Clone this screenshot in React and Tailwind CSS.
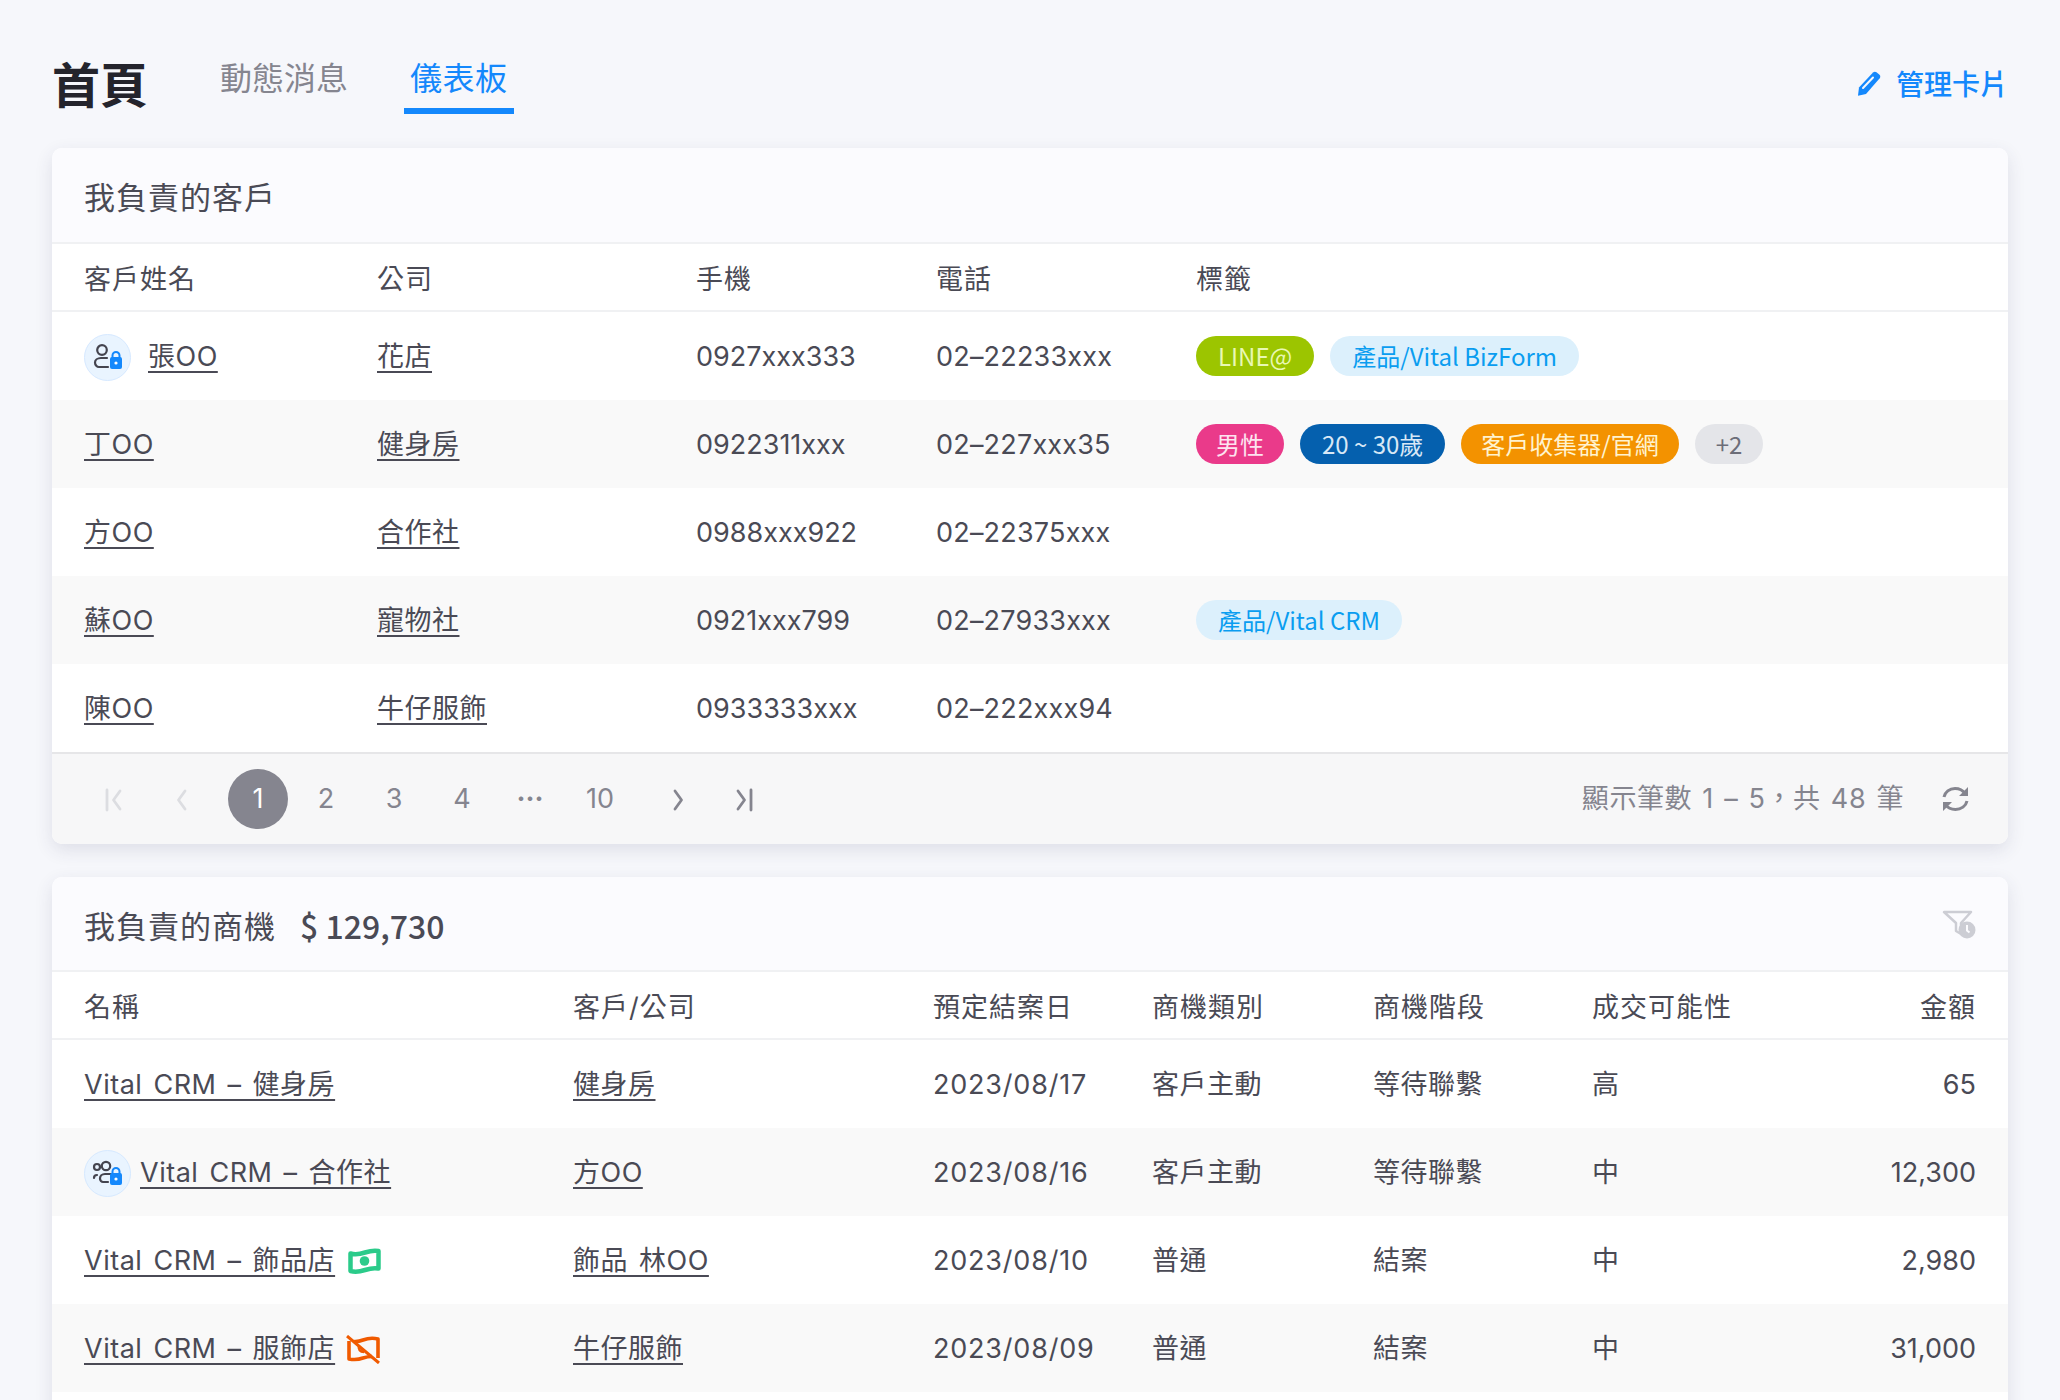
import React from "react";

const customers = [
  { name: "張OO", locked: true, company: "花店", mobile: "0927xxx333", phone: "02–22233xxx", tags: [["LINE@", "lime"], ["產品/Vital BizForm", "sky"]] },
  { name: "丁OO", company: "健身房", mobile: "0922311xxx", phone: "02–227xxx35", tags: [["男性", "pink"], ["20 ~ 30歲", "navy"], ["客戶收集器/官網", "orange"], ["+2", "gray"]] },
  { name: "方OO", company: "合作社", mobile: "0988xxx922", phone: "02–22375xxx", tags: [] },
  { name: "蘇OO", company: "寵物社", mobile: "0921xxx799", phone: "02–27933xxx", tags: [["產品/Vital CRM", "sky"]] },
  { name: "陳OO", company: "牛仔服飾", mobile: "0933333xxx", phone: "02–222xxx94", tags: [] },
];

const deals = [
  { name: "Vital CRM – 健身房", customer: "健身房", date: "2023/08/17", type: "客戶主動", stage: "等待聯繫", chance: "高", amount: "65" },
  { name: "Vital CRM – 合作社", locked: true, customer: "方OO", date: "2023/08/16", type: "客戶主動", stage: "等待聯繫", chance: "中", amount: "12,300" },
  { name: "Vital CRM – 飾品店", money: "paid", customer: "飾品 林OO", date: "2023/08/10", type: "普通", stage: "結案", chance: "中", amount: "2,980" },
  { name: "Vital CRM – 服飾店", money: "unpaid", customer: "牛仔服飾", date: "2023/08/09", type: "普通", stage: "結案", chance: "中", amount: "31,000" },
  { name: "", customer: "", date: "", type: "", stage: "", chance: "", amount: "" },
];

const tagColors = {
  lime: "bg-[#9cc500] text-[#e9f8b4] px-[22px]",
  sky: "bg-[#dcf0fc] text-[#0a9df0] px-[22px]",
  pink: "bg-[#ea3a8a] text-[#fde3ef] px-5",
  navy: "bg-[#0560ae] text-[#d8e8f6] px-[22px]",
  orange: "bg-[#f39200] text-[#fff3cf] px-5",
  gray: "bg-[#e4e5e9] text-[#6c6d78] px-[21px]",
};

const cjk = "font-['Noto_Sans_CJK_TC',sans-serif]";

function Tag({ label, color }) {
  return (
    <span className={`inline-flex h-10 items-center rounded-[20px] text-[24px] leading-none ${cjk} ${tagColors[color]}`}>
      {label}
    </span>
  );
}

function Link({ children }) {
  return <a className="tracking-[0.5px] underline decoration-[2px] underline-offset-[5px] [word-spacing:3px]">{children}</a>;
}

function LockBadge({ group }) {
  return (
    <span className="flex h-[47px] w-[47px] shrink-0 items-center justify-center rounded-full border border-[#d6e9ff] bg-[#e9f4ff]">
      <svg width="32" height="28" viewBox="0 0 32 28" fill="none">
        {group ? (
          <>
            <circle cx="5" cy="8" r="3" stroke="#44444f" strokeWidth="2.2" />
            <path d="M2 19c0-2 1-3 3-3" stroke="#44444f" strokeWidth="2.2" strokeLinecap="round" />
            <circle cx="14" cy="7" r="4.2" stroke="#44444f" strokeWidth="2.2" />
            <path d="M19 15h-6c-3 0-5 2-5 4.500 0 2 1.500 3.500 3 3.500h5" stroke="#44444f" strokeWidth="2.2" strokeLinecap="round" />
          </>
        ) : (
          <>
            <circle cx="10" cy="7" r="4.800" stroke="#44444f" strokeWidth="2.2" />
            <path d="M15 15H9c-3.500 0-6 2-6 4.500S5 24 7 24h9" stroke="#44444f" strokeWidth="2.2" strokeLinecap="round" />
          </>
        )}
        <path d="M20.500 15v-2.500a3.500 3.500 0 0 1 7 0V15" stroke="#1488fc" strokeWidth="2" />
        <rect x="18" y="14" width="12" height="12" rx="2" fill="#1488fc" />
        <circle cx="24" cy="20" r="1.600" fill="#fff" />
      </svg>
    </span>
  );
}

function MoneyIcon() {
  return (
    <svg width="33" height="26" viewBox="0 0 33 26" fill="none" className="shrink-0">
      <path d="M2.500 5.500c5 1.500 10 .5 14.500-1 4.500-1.500 9-2.500 13.500-1.500v17.500c-4.500-1-9 0-13.500 1.500-4.500 1.500-9.500 2.500-14.500 1V5.500z" stroke="#2bcb8a" strokeWidth="4.500" strokeLinejoin="round" />
      <circle cx="16.500" cy="13" r="4.800" fill="#2bcb8a" />
    </svg>
  );
}

function NoMoneyIcon() {
  return (
    <svg width="35" height="29" viewBox="0 0 35 29" fill="none" className="shrink-0">
      <path d="M8 6.500c3 .3 6-.3 9-1.500 4-1.500 9-2.500 15-1v19" stroke="#f05a00" strokeWidth="3.600" strokeLinejoin="round" />
      <path d="M3 6v18c5 1 10 .5 14-1 3-1 6-1.500 9-1.500" stroke="#f05a00" strokeWidth="3.600" strokeLinejoin="round" />
      <path d="M13 11c-1 3 1 6 5 6" stroke="#f05a00" strokeWidth="2.500" />
      <path d="M1 1l32 27" stroke="#f05a00" strokeWidth="3" />
    </svg>
  );
}

function PagerIcon({ kind, light }) {
  const color = light ? "#dcdde1" : "#85858f";
  const paths = {
    first: "M5 3v20M18 4l-6.500 9 6.500 9",
    prev: "M15 4l-6.500 9 6.500 9",
    next: "M9 4l6.500 9-6.500 9",
    last: "M19 3v20M6 4l6.500 9-6.500 9",
  };
  return (
    <svg width="24" height="26" viewBox="0 0 24 26" fill="none">
      <path d={paths[kind]} stroke={color} strokeWidth="2.800" strokeLinecap="round" strokeLinejoin="round" />
    </svg>
  );
}

function PageItem({ children, active, className = "" }) {
  return (
    <span className={`flex h-[60px] w-[60px] shrink-0 items-center justify-center rounded-full pt-px text-[27px] ${active ? "bg-[#85858f] text-white" : "text-[#85858f]"} ${className}`}>
      {children}
    </span>
  );
}

export default function App() {
  return (
    <div className="h-[1400px] overflow-hidden bg-[#f6f7fb] px-[52px] text-[27px] text-[#4a4a55]" style={{ fontFamily: "Inter, 'Noto Sans CJK TC', sans-serif" }}>
      {/* Header */}
      <header className="relative flex h-[148px] pt-[52px]">
        <h1 className={`text-[48px] font-bold leading-[60px] text-[#24242c] ${cjk}`}>首頁</h1>
        <nav className="ml-[64px] flex gap-[48px]">
          <a className={`h-[62px] px-2 text-[32px] leading-[48px] text-[#85858f] ${cjk}`}>動態消息</a>
          <a className={`h-[62px] border-b-[6px] border-[#1488fc] pl-1.5 pr-1.5 text-[32px] leading-[48px] tracking-[0.5px] text-[#1488fc] ${cjk}`}>儀表板</a>
        </nav>
        <a className={`ml-auto flex h-[62px] items-center gap-[15px] text-[28px] font-medium text-[#1488fc] ${cjk}`}>
          <svg width="24" height="25" viewBox="0 0 24 25" fill="none">
            <path d="M16 1.500c1-1 2.500-1 3.500-.2l3 2.500c1 1 1 2.500.2 3.500L9 23l-8 1.800L2 16.500 16 1.500z" fill="#1488fc" />
            <path d="M6 17L16 6.500" stroke="#f6f7fb" strokeWidth="2" strokeLinecap="round" />
          </svg>
          管理卡片
        </a>
      </header>

      {/* Customers */}
      <section className="overflow-hidden rounded-[10px] bg-white shadow-[0_6px_18px_rgba(50,50,90,0.12)]">
        <div className="flex h-[96px] items-center border-b-2 border-[#f0f1f3] bg-[#fbfbfe] pl-8 pt-[7px] text-[31px] tracking-[1px]">我負責的客戶</div>
        <div className="grid h-[68px] grid-cols-[293px_319px_240px_260px_1fr] items-center border-b-2 border-[#f0f1f3] pl-8 pt-[7px] tracking-[1px]">
          <span>客戶姓名</span>
          <span>公司</span>
          <span>手機</span>
          <span>電話</span>
          <span>標籤</span>
        </div>
        {customers.map((c, i) => (
          <div key={c.name} className={`grid h-[88px] grid-cols-[293px_319px_240px_260px_1fr] items-center pl-8 pt-0.5 ${i % 2 ? "bg-[#f9f9f9]" : "bg-white"}`}>
            <span className="flex items-center gap-[17px]">
              {c.locked && <LockBadge />}
              <Link>{c.name}</Link>
            </span>
            <span><Link>{c.company}</Link></span>
            <span>{c.mobile}</span>
            <span className="tracking-[0.2px]">{c.phone}</span>
            <span className="-mt-0.5 flex gap-4">
              {c.tags.map(([label, color]) => <Tag key={label} label={label} color={color} />)}
            </span>
          </div>
        ))}
        <div className="flex h-[92px] items-center border-t-2 border-[#e6e6e8] bg-[#f7f7f8] pl-[32px] pr-[39px]">
          <PageItem><PagerIcon kind="first" light /></PageItem>
          <PageItem className="ml-2"><PagerIcon kind="prev" light /></PageItem>
          <div className="ml-4 flex gap-2">
            <PageItem active>1</PageItem>
            <PageItem>2</PageItem>
            <PageItem>3</PageItem>
            <PageItem>4</PageItem>
            <PageItem className="font-bold">···</PageItem>
            <PageItem className="ml-0.5">10</PageItem>
          </div>
          <PageItem className="ml-[18px]"><PagerIcon kind="next" /></PageItem>
          <PageItem className="ml-1.5"><PagerIcon kind="last" /></PageItem>
          <span className="ml-auto pt-px tracking-[0.6px] text-[#85858f] [word-spacing:2px]">顯示筆數 1 – 5，共 48 筆</span>
          <svg width="27" height="26" viewBox="0 0 27 26" fill="none" className="ml-[38px]">
            <path d="M2 11C3 6 7.500 2.500 13 2.500c4 0 8 2 10 5M25 15c-1 5-6 8.500-11.500 8.500-4 0-8-2-10-5" stroke="#85858f" strokeWidth="3" />
            <path d="M26 1v9h-9zM1 25v-9h9z" fill="#85858f" />
          </svg>
        </div>
      </section>

      {/* Deals */}
      <section className="mt-[33px] overflow-hidden rounded-t-[10px] bg-white shadow-[0_6px_18px_rgba(50,50,90,0.12)]">
        <div className="flex h-[95px] items-center border-b-2 border-[#f0f1f3] bg-[#fbfbfe] px-8 text-[31px] tracking-[1px]">
          <span className="pt-[7px]">我負責的商機</span>
          <span className={`ml-6 pt-[3px] text-[32px] font-medium tracking-normal ${cjk}`}>$ 129,730</span>
          <svg width="34" height="29" viewBox="0 0 34 29" fill="none" className="ml-auto mt-0.5">
            <path d="M2 2h27L19 13v11l-5-3V13L2 2z" stroke="#cccdd4" strokeWidth="2.500" strokeLinejoin="round" />
            <circle cx="25" cy="20" r="8.500" fill="#cccdd4" />
            <path d="M25 15v5.500l2.500 2" stroke="#fbfbfe" strokeWidth="2" />
          </svg>
        </div>
        <div className="grid h-[68px] grid-cols-[489px_360px_219px_221px_219px_1fr] items-center border-b-2 border-[#f0f1f3] px-8 pt-[7px] tracking-[1px]">
          <span>名稱</span>
          <span>客戶/公司</span>
          <span>預定結案日</span>
          <span>商機類別</span>
          <span>商機階段</span>
          <span className="flex justify-between">成交可能性<span>金額</span></span>
        </div>
        {deals.map((d, i) => (
          <div key={i} className={`grid h-[88px] grid-cols-[489px_360px_219px_221px_219px_1fr] items-center px-8 pt-0.5 ${i % 2 ? "bg-[#f9f9f9]" : "bg-white"}`}>
            <span className="flex items-center gap-[9px]">
              {d.locked && <LockBadge group />}
              <Link>{d.name}</Link>
              {d.money === "paid" && <span className="ml-1"><MoneyIcon /></span>}
              {d.money === "unpaid" && <span className="ml-0.5"><NoMoneyIcon /></span>}
            </span>
            <span><Link>{d.customer}</Link></span>
            <span className="tracking-[0.8px]">{d.date}</span>
            <span className="tracking-[0.5px]">{d.type}</span>
            <span className="tracking-[0.5px]">{d.stage}</span>
            <span className="flex justify-between">{d.chance}<span>{d.amount}</span></span>
          </div>
        ))}
      </section>
    </div>
  );
}
